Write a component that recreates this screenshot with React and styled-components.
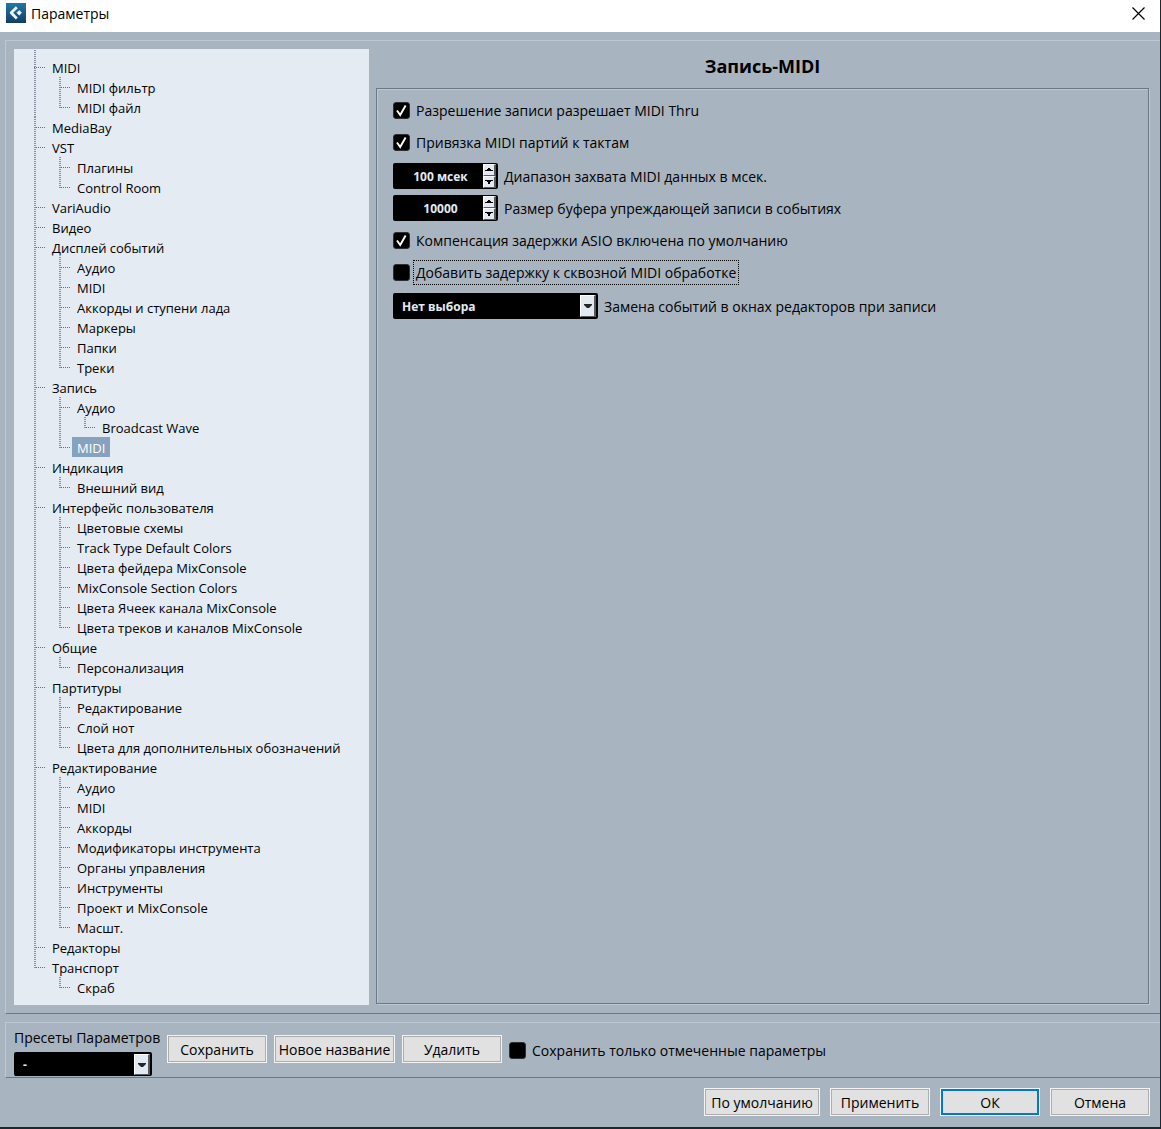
import { useState } from "react"
import styled, { createGlobalStyle, css } from "styled-components"

const tree = [
    { name: "MIDI", children: [{ name: "MIDI фильтр" }, { name: "MIDI файл" }] },
    { name: "MediaBay" },
    { name: "VST", children: [{ name: "Плагины" }, { name: "Control Room" }] },
    { name: "VariAudio" },
    { name: "Видео" },
    {
        name: "Дисплей событий",
        children: [
            { name: "Аудио" },
            { name: "MIDI" },
            { name: "Аккорды и ступени лада" },
            { name: "Маркеры" },
            { name: "Папки" },
            { name: "Треки" },
        ],
    },
    {
        name: "Запись",
        children: [
            { name: "Аудио", children: [{ name: "Broadcast Wave" }] },
            { name: "MIDI" },
        ],
    },
    { name: "Индикация", children: [{ name: "Внешний вид" }] },
    {
        name: "Интерфейс пользователя",
        children: [
            { name: "Цветовые схемы" },
            { name: "Track Type Default Colors" },
            { name: "Цвета фейдера MixConsole" },
            { name: "MixConsole Section Colors" },
            { name: "Цвета Ячеек канала MixConsole" },
            { name: "Цвета треков и каналов MixConsole" },
        ],
    },
    { name: "Общие", children: [{ name: "Персонализация" }] },
    {
        name: "Партитуры",
        children: [
            { name: "Редактирование" },
            { name: "Слой нот" },
            { name: "Цвета для дополнительных обозначений" },
        ],
    },
    {
        name: "Редактирование",
        children: [
            { name: "Аудио" },
            { name: "MIDI" },
            { name: "Аккорды" },
            { name: "Модификаторы инструмента" },
            { name: "Органы управления" },
            { name: "Инструменты" },
            { name: "Проект и MixConsole" },
            { name: "Масшт." },
        ],
    },
    { name: "Редакторы" },
    { name: "Транспорт", children: [{ name: "Скраб" }] },
]

function Nodes({ items, path, selected, onSelect }) {
    return items.map((item) => {
        const id = path ? `${path}/${item.name}` : item.name
        return (
            <Node key={id} $root={!path}>
                <NodeButton type="button" $active={id === selected} onClick={() => onSelect(id)}>
                    {item.name}
                </NodeButton>
                {item.children && (
                    <Branch>
                        <Nodes items={item.children} path={id} selected={selected} onSelect={onSelect} />
                    </Branch>
                )}
            </Node>
        )
    })
}

function Check({ label, checked, focused }) {
    return (
        <CheckLabel>
            <CheckBox>
                <input type="checkbox" defaultChecked={checked} />
                <svg viewBox="0 0 17 17" aria-hidden="true">
                    <path d="M4 8.5 L7.2 13 L12.6 3.5" fill="none" stroke="#fff" strokeWidth="1.9" />
                </svg>
            </CheckBox>
            <CheckText $focused={focused}>{label}</CheckText>
        </CheckLabel>
    )
}

function Spinner({ id, label, initial, unit }) {
    const [value, setValue] = useState(initial)

    return (
        <Row>
            <SpinBox>
                <input
                    id={id}
                    type="text"
                    value={unit ? `${value} ${unit}` : value}
                    onChange={(e) => setValue(parseInt(e.target.value) || 0)}
                />
                <SpinButtons>
                    <button type="button" aria-label="Больше" onClick={() => setValue(value + 1)}>
                        <svg width="8" height="4" viewBox="0 0 8 4"><path d="M3 0 H5 V1 H6 V2 H8 V3 H0 V2 H2 V1 H3 Z" /></svg>
                    </button>
                    <button type="button" aria-label="Меньше" onClick={() => setValue(value - 1)}>
                        <svg width="8" height="4" viewBox="0 0 8 4"><path d="M0 0 H8 V1 H6 V2 H5 V4 H3 V2 H2 V1 H0 Z" /></svg>
                    </button>
                </SpinButtons>
            </SpinBox>
            <label htmlFor={id}>{label}</label>
        </Row>
    )
}

function DropDown({ id, options, width, clipped }) {
    return (
        <SelectBox $width={width} $clipped={clipped}>
            <select id={id}>
                {options.map((o) => <option key={o}>{o}</option>)}
            </select>
            <Arrow aria-hidden="true">
                <svg width="8" height="4" viewBox="0 0 8 4"><path d="M0 0 H8 V1 L5 4 H3 L0 1 Z" fill="#22262b" /></svg>
            </Arrow>
        </SelectBox>
    )
}

export default function App() {
    const [selected, setSelected] = useState("Запись/MIDI")

    return (
        <>
            <GlobalStyle />
            <Window>
                <TitleBar>
                    <svg width="20" height="20" viewBox="0 0 20 20" aria-hidden="true">
                        <defs>
                            <linearGradient id="logo" x1="0" y1="0" x2="0" y2="1">
                                <stop offset="0" stopColor="#2277a8" />
                                <stop offset="1" stopColor="#123f63" />
                            </linearGradient>
                        </defs>
                        <rect width="20" height="20" fill="url(#logo)" />
                        <path d="M10.8 4.2 L5.2 9.8 L10.8 15.4" fill="none" stroke="#eef4f8" strokeWidth="2.8" strokeLinejoin="round" />
                        <path d="M13.2 7.4 L15.6 9.8 L13.2 12.2 L10.8 9.8 Z" fill="#eef4f8" stroke="#eef4f8" strokeWidth="0.6" strokeLinejoin="round" />
                    </svg>
                    <span>Параметры</span>
                    <CloseButton type="button" aria-label="Закрыть">
                        <svg width="13" height="13" viewBox="0 0 13 13">
                            <path d="M0.5 0.5 L12.5 12.5 M12.5 0.5 L0.5 12.5" stroke="#000" strokeWidth="1.2" />
                        </svg>
                    </CloseButton>
                </TitleBar>

                <Main>
                    <Sidebar>
                        <Root>
                            <Nodes items={tree} path="" selected={selected} onSelect={setSelected} />
                        </Root>
                    </Sidebar>
                    <Page>
                        <h1>Запись-MIDI</h1>
                        <Panel>
                            <Group>
                                <Check label="Разрешение записи разрешает MIDI Thru" checked />
                                <Check label="Привязка MIDI партий к тактам" checked />
                            </Group>
                            <Group>
                                <Spinner id="range" label="Диапазон захвата MIDI данных в мсек." initial={100} unit="мсек" />
                                <Spinner id="buffer" label="Размер буфера упреждающей записи в событиях" initial={10000} />
                                <Check label="Компенсация задержки ASIO включена по умолчанию" checked />
                                <Check label="Добавить задержку к сквозной MIDI обработке" focused />
                            </Group>
                            <Row>
                                <DropDown id="replace" options={["Нет выбора", "Контроллеры", "Все"]} width={205} />
                                <label htmlFor="replace">Замена событий в окнах редакторов при записи</label>
                            </Row>
                        </Panel>
                    </Page>
                </Main>

                <Presets>
                    <PresetField>
                        <label htmlFor="preset">Пресеты Параметров</label>
                        <DropDown id="preset" options={["-"]} width={138} clipped />
                    </PresetField>
                    <PresetActions>
                        <Button type="button">Сохранить</Button>
                        <Button type="button" $width={121}>Новое название</Button>
                        <Button type="button">Удалить</Button>
                        <Check label="Сохранить только отмеченные параметры" />
                    </PresetActions>
                </Presets>

                <Footer>
                    <Button type="button" $width={116}>По умолчанию</Button>
                    <Button type="button">Применить</Button>
                    <Button type="button" $primary>ОК</Button>
                    <Button type="button">Отмена</Button>
                </Footer>
            </Window>
        </>
    )
}

const GlobalStyle = createGlobalStyle`
    *{
        box-sizing: border-box;
    }

    body{
        margin: 0;
        font-family: "Open Sans", "Noto Sans", sans-serif;
        font-size: 14px;
        color: #000;
    }

    button, input, select{
        font: inherit;
        color: inherit;
    }
`

const Window = styled.div`
    min-height: 100vh;
    display: flex;
    flex-direction: column;
    background-color: #a8b4c0;
    border-right: 1px solid #20262c;
    border-bottom: 2px solid #20262c;
`

const TitleBar = styled.header`
    height: 32px;
    padding: 0 0 6px 6px;
    display: flex;
    align-items: center;
    gap: 5px;
    background-color: #fff;
`

const CloseButton = styled.button`
    margin-left: auto;
    width: 43px;
    height: 26px;
    padding: 0;
    border: none;
    background: none;
    display: flex;
    align-items: center;
    justify-content: center;
`

const frame = css`
    margin-left: 5px;
    border-top: 1px solid #bcc8d5;
    border-left: 1px solid #bcc8d5;
    border-bottom: 1px solid #6b7785;
`

const Main = styled.main`
    ${frame}
    flex: 1;
    margin-top: 8px;
    padding: 8px 11px 8px 8px;
    display: flex;
    gap: 7px;
`

const Sidebar = styled.nav`
    flex: 0 0 355px;
    background-color: #e4ebf3;
    font-size: 13px;
`

const Root = styled.ul`
    margin: 0;
    padding: 1px 0 0 20px;
    list-style: none;
`

const Branch = styled.ul`
    margin: 0;
    padding: 0 0 0 12px;
    list-style: none;
`

const Node = styled.li`
    --line: 10px;
    padding-left: 13px;
    background-image:
        repeating-linear-gradient(to bottom, #8790a0 0 1px, transparent 1px 2px),
        repeating-linear-gradient(to right, #656e7a 0 1px, transparent 1px 2px);
    background-repeat: no-repeat;
    background-size: 2px 100%, 12px 1px;
    background-position: 0 0, 0 var(--line);

    &:last-child{
        background-size: 2px 11px, 12px 1px;
    }

    ${({ $root }) => $root && css`
        &:first-child{
            --line: 17px;
            padding-top: 7px;
        }
    `}
`

const NodeButton = styled.button`
    display: block;
    height: 20px;
    padding: 2px 5px 0;
    border: none;
    line-height: 18px;
    white-space: nowrap;
    background-color: ${({ $active }) => ($active ? "#86a2be" : "transparent")};
    color: ${({ $active }) => ($active ? "#fff" : "#000")};
`

const Page = styled.section`
    flex: 1;
    min-width: 0;
    display: flex;
    flex-direction: column;

    h1{
        margin: 0;
        height: 39px;
        line-height: 35px;
        font-size: 18px;
        font-weight: 700;
        text-align: center;
    }
`

const Panel = styled.div`
    flex: 1;
    margin-bottom: 1px;
    padding: 8px 16px;
    display: flex;
    flex-direction: column;
    gap: 8px;
    border: 1px solid #6b7785;
    box-shadow: inset 1px 1px #bcc8d5, 1px 1px #bcc8d5;
`

const Group = styled.div`
    display: flex;
    flex-direction: column;
    gap: 6px;
`

const Row = styled.div`
    min-height: 26px;
    display: flex;
    align-items: center;
    gap: 6px;
`

const CheckLabel = styled.label`
    min-height: 26px;
    display: flex;
    align-items: center;
    gap: 3px;
`

const CheckBox = styled.span`
    display: grid;
    width: 17px;
    height: 17px;

    input, svg{
        grid-area: 1 / 1;
        width: 17px;
        height: 17px;
        margin: 0;
    }

    input{
        appearance: none;
        background-color: #000;
        border: 1px solid #2b3036;
        border-radius: 3px;
    }

    svg{
        visibility: hidden;
        pointer-events: none;
    }

    input:checked + svg{
        visibility: visible;
    }
`

const CheckText = styled.span`
    padding: 2px;
    border: 1px dotted ${({ $focused }) => ($focused ? "#000" : "transparent")};
`

const SpinBox = styled.div`
    width: 105px;
    height: 26px;
    padding: 1px 2px 1px 1px;
    display: flex;
    background-color: #000;
    border-radius: 2px;

    input{
        flex: 1;
        min-width: 0;
        padding: 0 0 0 4px;
        border: none;
        background: none;
        color: #e3ebf5;
        font-size: 12px;
        font-weight: 700;
        text-align: center;
    }
`

const SpinButtons = styled.div`
    width: 13px;
    display: flex;
    flex-direction: column;

    button{
        flex: 1;
        padding: 0;
        display: flex;
        align-items: center;
        justify-content: center;
        background-color: #e3e9f1;
        border: 1px solid #fff;
        border-right: 2px solid #555a61;
        border-bottom-color: #555a61;
    }
`

const SelectBox = styled.div`
    width: ${({ $width }) => $width}px;
    height: ${({ $clipped }) => ($clipped ? 24 : 26)}px;
    display: grid;
    padding: 1px 2px ${({ $clipped }) => ($clipped ? 0 : 1)}px 1px;
    background-color: #000;
    border-radius: 2px;

    select{
        grid-area: 1 / 1;
        appearance: none;
        padding: 0 20px 0 8px;
        border: none;
        background-color: #000;
        color: #e3ebf5;
        font-size: 12px;
        font-weight: 700;
    }
`

const Arrow = styled.span`
    grid-area: 1 / 1;
    justify-self: end;
    width: 16px;
    margin: 1px 0;
    display: flex;
    align-items: center;
    justify-content: center;
    pointer-events: none;
    background-color: #e3e9f1;
    border: 1px solid #fff;
    border-right: 2px solid #555a61;
    border-bottom-color: #555a61;
`

const Presets = styled.section`
    ${frame}
    margin-top: 8px;
    padding: 0 8px 1px;
    display: flex;
    gap: 5px;
`

const PresetField = styled.div`
    width: 148px;
    display: flex;
    flex-direction: column;

    label{
        height: 29px;
        line-height: 30px;
        white-space: nowrap;
    }
`

const PresetActions = styled.div`
    padding-top: 12px;
    display: flex;
    align-items: flex-start;
    gap: 7px;

    ${CheckLabel}{
        min-height: 30px;
    }
`

const Button = styled.button`
    width: ${({ $width }) => $width || 100}px;
    height: 28px;
    padding: 0;
    white-space: nowrap;
    background-color: #e1e1e1;
    border: 1px solid #f4f4f4;
    box-shadow: inset 0 0 0 ${({ $primary }) => ($primary ? "2px #0078d7" : "1px #adadad")};
`

const Footer = styled.footer`
    padding: 10px 10px 11px;
    display: flex;
    justify-content: flex-end;
    gap: 10px;
`
